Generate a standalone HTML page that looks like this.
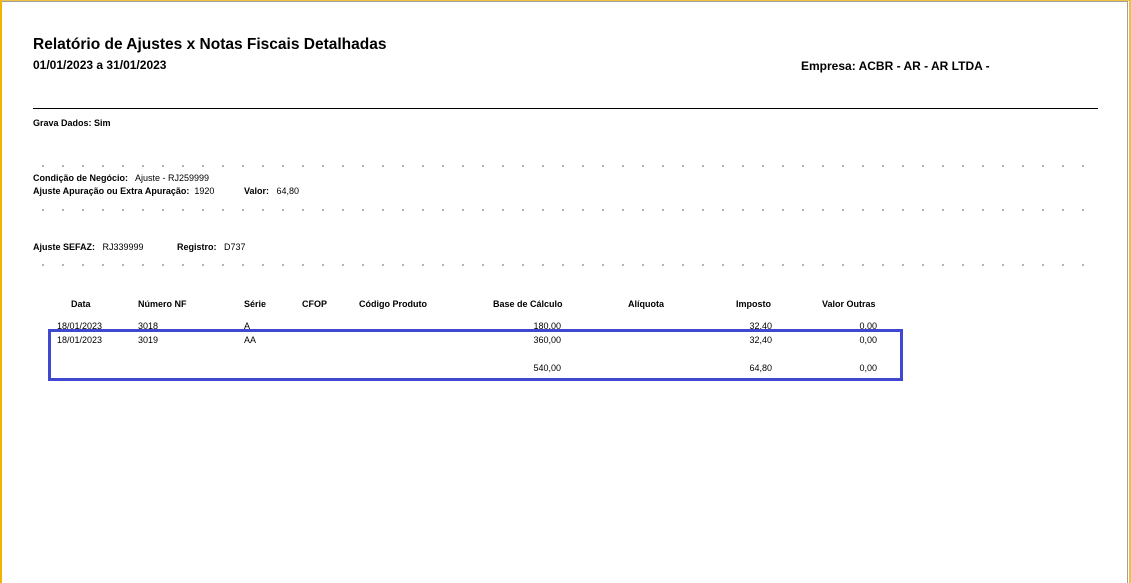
<!DOCTYPE html>
<html><head><meta charset="utf-8"><style>
body{margin:0;width:1131px;height:583px;background:#fff;position:relative;overflow:hidden;font-family:"Liberation Sans",sans-serif;color:#000}
.frame{position:absolute;left:0;top:0;width:1129px;height:583px;border-left:2px solid #f0b400;border-top:1px solid #f0c040;box-sizing:border-box}
.inner{position:absolute;left:2px;top:1px;width:1126px;height:582px;border-top:1px solid #a0a0a0;border-right:1px solid #a0a0a0;box-sizing:border-box}
.rb{position:absolute;right:0;top:0;width:2px;height:583px;background:#f0c040}
.t{position:absolute;white-space:nowrap;font-size:9px}
.b{font-weight:bold}
.dots{position:absolute;left:33px;width:1060px;height:2px;background-image:radial-gradient(circle,#6a8a9a 0.7px,transparent 1px);background-size:20px 2px;background-repeat:repeat-x}
.r{text-align:right}
</style></head><body>
<div class="frame"></div><div class="inner"></div><div class="rb"></div>
<div class="t b" style="left:33px;top:36px;font-size:15.5px">Relatório de Ajustes x Notas Fiscais Detalhadas</div>
<div class="t b" style="left:33px;top:58px;font-size:12px">01/01/2023 a 31/01/2023</div>
<div class="t b" style="left:801px;top:59px;font-size:12px">Empresa: ACBR - AR - AR LTDA -</div>
<div style="position:absolute;left:33px;top:108px;width:1065px;height:1px;background:#000"></div>
<div class="t b" style="left:33px;top:118px">Grava Dados: Sim</div>
<div class="dots" style="top:165px"></div>
<div class="t" style="left:33px;top:173px"><b>Condição de Negócio:</b>&nbsp;&nbsp; Ajuste - RJ259999</div>
<div class="t" style="left:33px;top:186px"><b>Ajuste Apuração ou Extra Apuração:</b>&nbsp; 1920</div>
<div class="t" style="left:244px;top:186px"><b>Valor:</b>&nbsp;&nbsp; 64,80</div>
<div class="dots" style="top:209px"></div>
<div class="t" style="left:33px;top:242px"><b>Ajuste SEFAZ:</b>&nbsp;&nbsp; RJ339999</div>
<div class="t" style="left:177px;top:242px"><b>Registro:</b>&nbsp;&nbsp; D737</div>
<div class="dots" style="top:264px"></div>
<div class="t b" style="left:71px;top:299px">Data</div>
<div class="t b" style="left:138px;top:299px">Número NF</div>
<div class="t b" style="left:244px;top:299px">Série</div>
<div class="t b" style="left:302px;top:299px">CFOP</div>
<div class="t b" style="left:359px;top:299px">Código Produto</div>
<div class="t b" style="left:493px;top:299px">Base de Cálculo</div>
<div class="t b" style="left:628px;top:299px">Alíquota</div>
<div class="t b" style="left:736px;top:299px">Imposto</div>
<div class="t b" style="left:822px;top:299px">Valor Outras</div>
<div class="t" style="left:57px;top:321px">18/01/2023</div><div class="t" style="left:138px;top:321px">3018</div><div class="t" style="left:244px;top:321px">A</div>
<div class="t r" style="left:461px;width:100px;top:321px">180,00</div><div class="t r" style="left:672px;width:100px;top:321px">32,40</div><div class="t r" style="left:777px;width:100px;top:321px">0,00</div>
<div class="t" style="left:57px;top:335px">18/01/2023</div><div class="t" style="left:138px;top:335px">3019</div><div class="t" style="left:244px;top:335px">AA</div>
<div class="t r" style="left:461px;width:100px;top:335px">360,00</div><div class="t r" style="left:672px;width:100px;top:335px">32,40</div><div class="t r" style="left:777px;width:100px;top:335px">0,00</div>
<div class="t r" style="left:461px;width:100px;top:363px">540,00</div><div class="t r" style="left:672px;width:100px;top:363px">64,80</div><div class="t r" style="left:777px;width:100px;top:363px">0,00</div>
<div style="position:absolute;left:48px;top:329px;width:855px;height:52px;border:3px solid #4048d0;box-sizing:border-box"></div>
</body></html>
